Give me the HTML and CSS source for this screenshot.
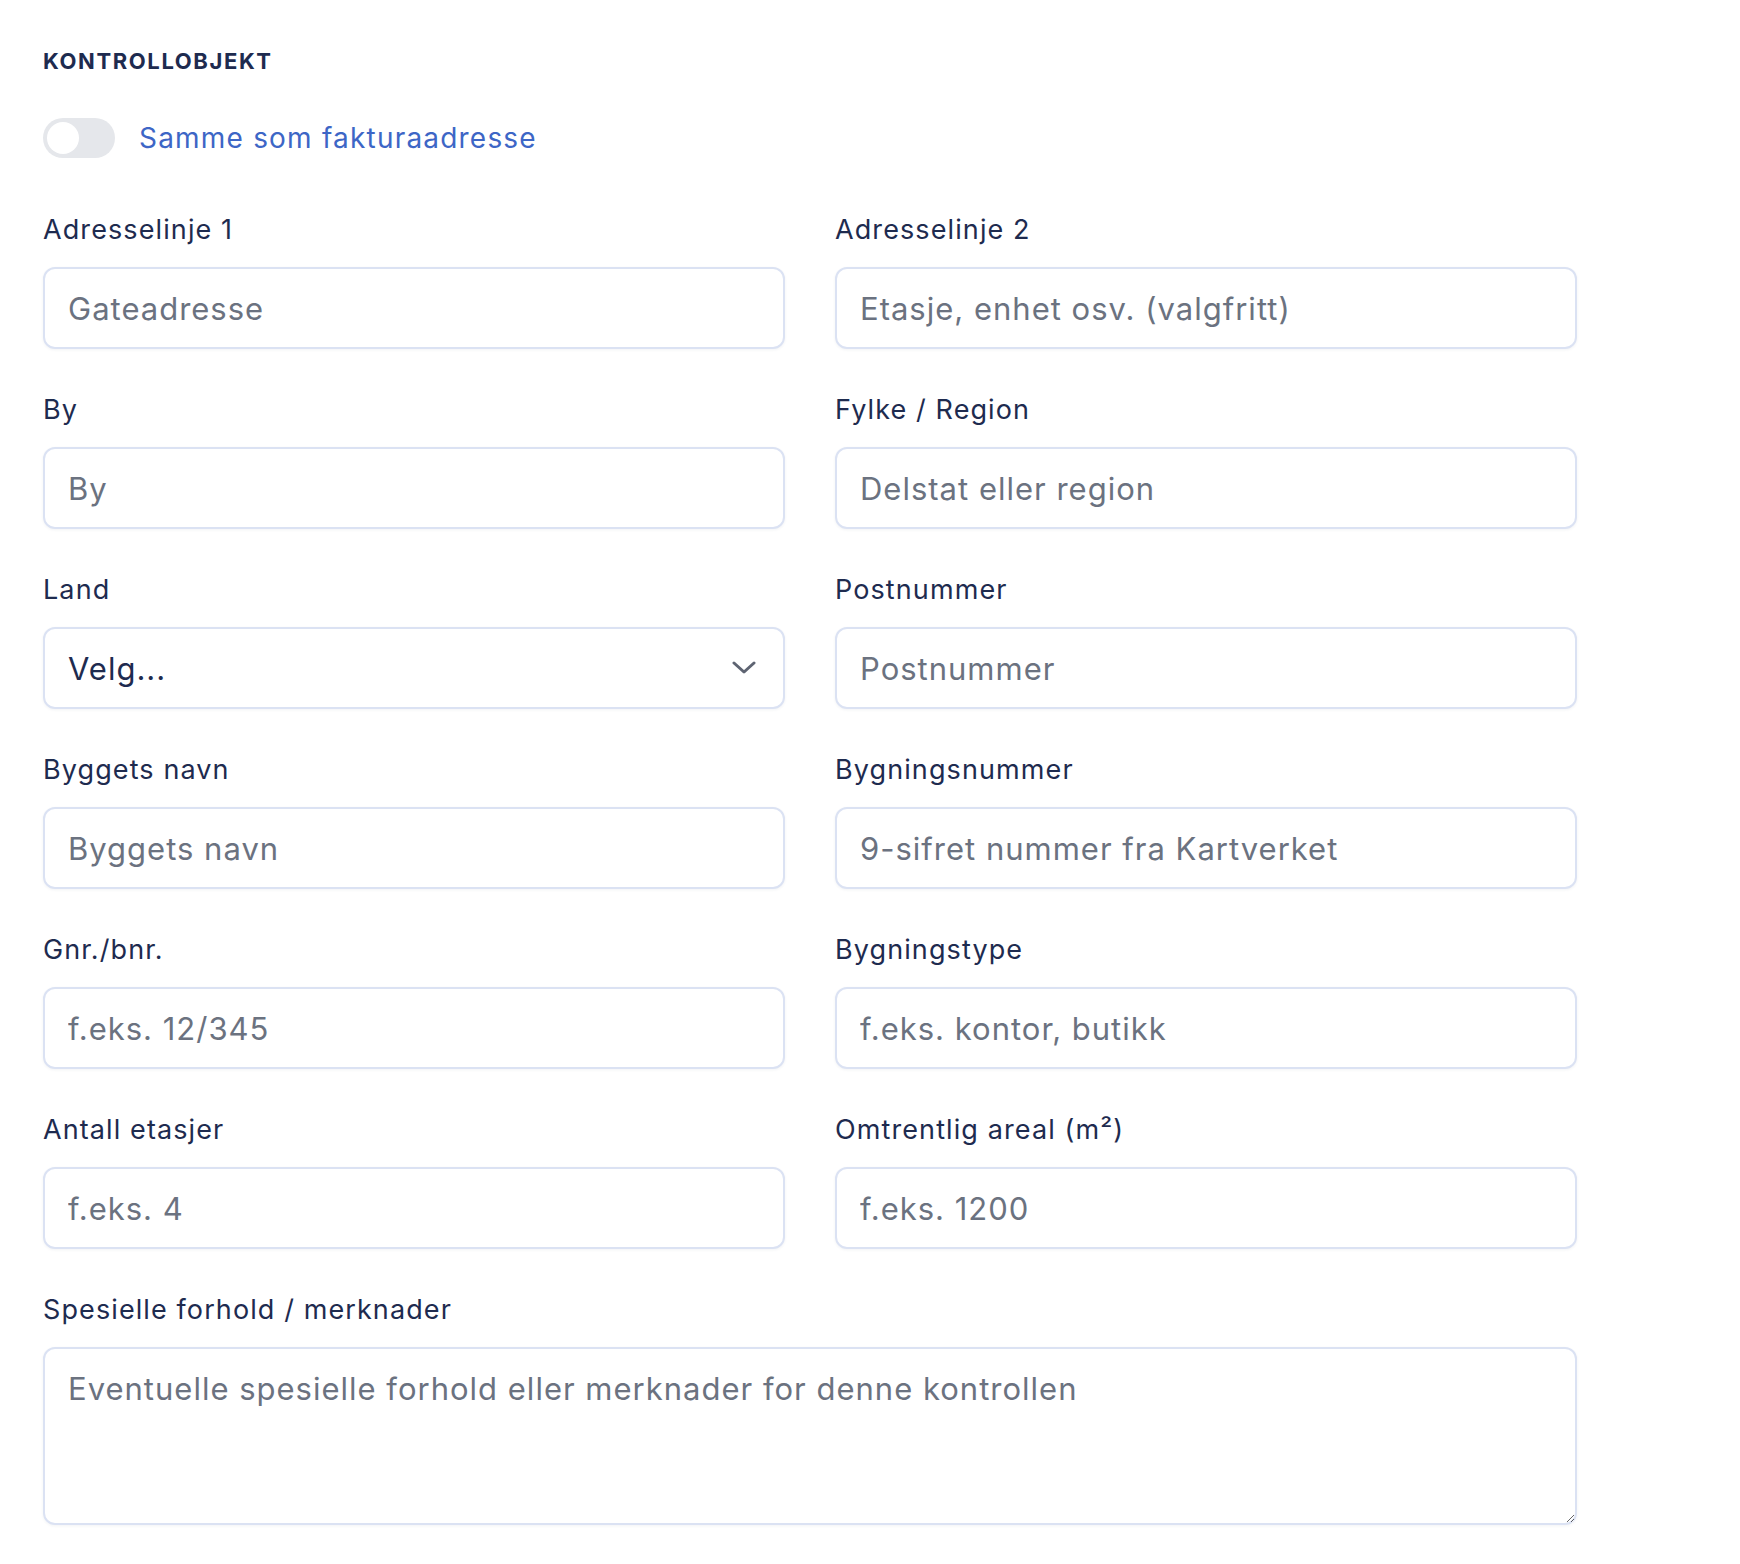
FILE: index.html
```html
<!DOCTYPE html>
<html lang="no">

<head>
  <meta charset="UTF-8">
  <meta name="viewport" content="width=device-width, initial-scale=1.0">
  <title>Kontrollobjekt</title>

  <link rel="stylesheet" href="styles.css">
</head>

<body>
  <div class="section">
    <h2 class="sectionTitle">KONTROLLOBJEKT</h2>

    <label class="switchRow">
      <span class="switch"><span class="knob"></span></span>
      <span class="switchText">Samme som fakturaadresse</span>
    </label>

    <div class="formGrid">
      <div class="field">
        <label>Adresselinje 1</label>
        <input type="text" placeholder="Gateadresse">
      </div>
      <div class="field">
        <label>Adresselinje 2</label>
        <input type="text" placeholder="Etasje, enhet osv. (valgfritt)">
      </div>

      <div class="field">
        <label>By</label>
        <input type="text" placeholder="By">
      </div>
      <div class="field">
        <label>Fylke / Region</label>
        <input type="text" placeholder="Delstat eller region">
      </div>

      <div class="field">
        <label>Land</label>
        <div class="selectWrap">
          <select>
            <option>Velg...</option>
          </select>
          <svg class="chevron" width="24" height="14" viewBox="0 0 24 14">
            <path d="M2 2 L12 11 L22 2" fill="none" stroke="#5e6472" stroke-width="3" stroke-linecap="round" stroke-linejoin="round" />
          </svg>
        </div>
      </div>
      <div class="field">
        <label>Postnummer</label>
        <input type="text" placeholder="Postnummer">
      </div>

      <div class="field">
        <label>Byggets navn</label>
        <input type="text" placeholder="Byggets navn">
      </div>
      <div class="field">
        <label>Bygningsnummer</label>
        <input type="text" placeholder="9-sifret nummer fra Kartverket">
      </div>

      <div class="field">
        <label>Gnr./bnr.</label>
        <input type="text" placeholder="f.eks. 12/345">
      </div>
      <div class="field">
        <label>Bygningstype</label>
        <input type="text" placeholder="f.eks. kontor, butikk">
      </div>

      <div class="field">
        <label>Antall etasjer</label>
        <input type="text" placeholder="f.eks. 4">
      </div>
      <div class="field">
        <label>Omtrentlig areal (m²)</label>
        <input type="text" placeholder="f.eks. 1200">
      </div>

      <div class="field wide">
        <label>Spesielle forhold / merknader</label>
        <textarea placeholder="Eventuelle spesielle forhold eller merknader for denne kontrollen"></textarea>
      </div>
    </div>
  </div>
</body>

</html>
```

FILE: styles.css
```css
body {
  margin: 0;
  background: #fff;
  font-family: Inter, "Open Sans", sans-serif;
  color: #1e2b4f;
}

.section {
  width: 1534px;
  padding: 44px 0 40px 43px;
}

.sectionTitle {
  margin: 0;
  font-size: 22px;
  line-height: 34px;
  font-weight: 700;
  letter-spacing: 1.6px;
  color: #1e2b4f;
}

/* toggle */
.switchRow {
  display: flex;
  align-items: center;
  gap: 24px;
  margin-top: 40px;
  cursor: pointer;
}

.switch {
  width: 72px;
  height: 40px;
  border-radius: 20px;
  background: #e5e7eb;
  position: relative;
}

.switch>.knob {
  position: absolute;
  left: 4px;
  top: 4px;
  width: 32px;
  height: 32px;
  border-radius: 50%;
  background: #fff;
}

.switchText {
  font-size: 28px;
  letter-spacing: 1.2px;
  color: #3d66c6;
}

/* form */
.formGrid {
  display: grid;
  grid-template-columns: 1fr 1fr;
  column-gap: 50px;
  row-gap: 41px;
  margin-top: 52px;
}

.field {
  display: flex;
  flex-direction: column;
}

.field.wide {
  grid-column: 1 / 3;
}

.field>label {
  font-size: 27px;
  line-height: 40px;
  letter-spacing: 1.1px;
  margin-bottom: 17px;
  color: #1e2b4f;
}

.field input,
.field select,
.field textarea {
  box-sizing: border-box;
  width: 100%;
  height: 82px;
  border: 2px solid #dbe2f3;
  border-radius: 12px;
  padding: 0 23px;
  font-family: inherit;
  font-size: 31px;
  letter-spacing: 1px;
  color: #1e2b4f;
  background: #fff;
  box-shadow: 0 1px 3px rgba(30, 43, 79, 0.06);
  outline: none;
}

.field input::placeholder,
.field textarea::placeholder {
  color: #6b7280;
}

.selectWrap {
  position: relative;
}

.field select {
  appearance: none;
  -webkit-appearance: none;
}

.chevron {
  position: absolute;
  right: 29px;
  top: 34px;
  pointer-events: none;
}

.field textarea {
  height: 178px;
  padding: 18px 23px;
  line-height: 44px;
  resize: vertical;
}
```
